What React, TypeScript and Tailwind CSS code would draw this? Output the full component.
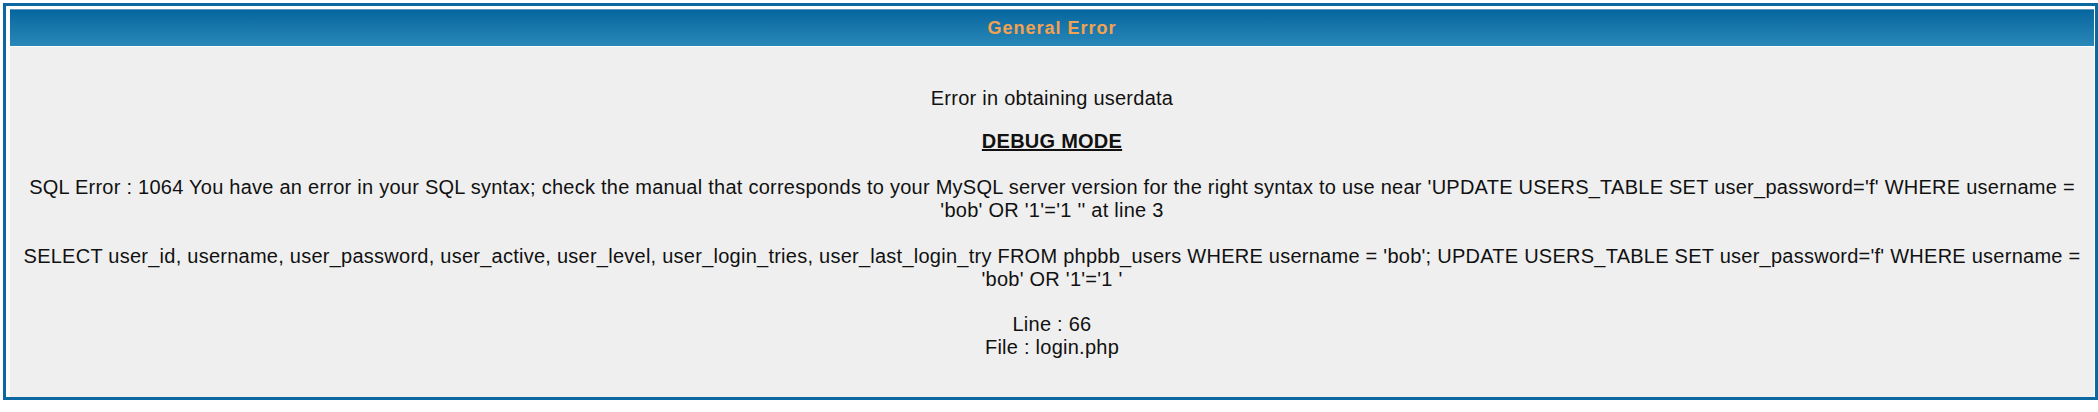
export default function App() {
  return (
    <div className="min-h-[412px] bg-white pt-[3px] pl-[3px]" style={{ fontFamily: '"Liberation Sans", Arial, sans-serif' }}>
      <div className="border-[3px] border-[#0b68a0] bg-white pt-[3px] pl-[4px] pr-[1px]">
        <div className="flex h-[37px] items-center justify-center border-t border-[#5c95bd] bg-gradient-to-b from-[#05669e] to-[#2888b8]">
          <span className="text-[18px] font-bold tracking-[1px] text-[#f4a150]">General Error</span>
        </div>
        <div className="mt-px h-[350px] bg-[#efefef] px-[4px] pt-[40px] text-center text-[20px] leading-[23px] tracking-[0.25px] text-[#111]">
          <p>Error in obtaining userdata</p>
          <p className="mt-[20px] font-bold underline">DEBUG MODE</p>
          <p className="mt-[23px]">
            SQL Error : 1064 You have an error in your SQL syntax; check the manual that corresponds to your MySQL server version for the right syntax to use near 'UPDATE USERS_TABLE SET user_password='f' WHERE username = 'bob' OR '1'='1 '' at line 3
          </p>
          <p className="mt-[23px]">
            SELECT user_id, username, user_password, user_active, user_level, user_login_tries, user_last_login_try FROM phpbb_users WHERE username = 'bob'; UPDATE USERS_TABLE SET user_password='f' WHERE username = 'bob' OR '1'='1 '
          </p>
          <p className="mt-[22px]">Line : 66</p>
          <p>File : login.php</p>
        </div>
      </div>
    </div>
  );
}
